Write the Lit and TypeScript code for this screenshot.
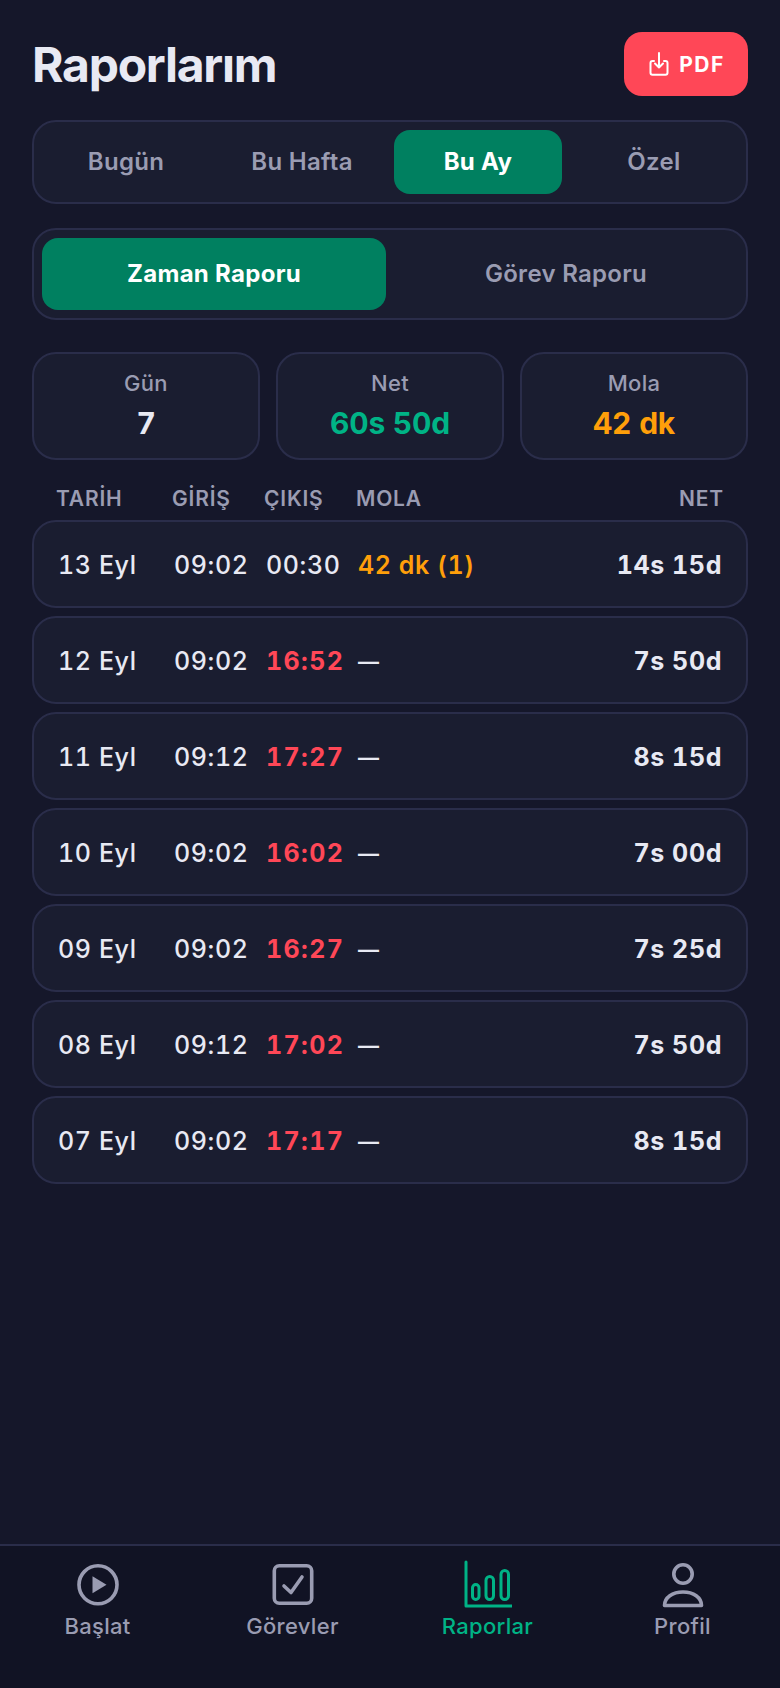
import { LitElement, html, css } from "lit";
import { customElement } from "lit/decorators.js";

const rows = [
  ["13 Eyl", "09:02", "00:30", "42 dk (1)", "14s 15d"],
  ["12 Eyl", "09:02", "16:52", "—", "7s 50d"],
  ["11 Eyl", "09:12", "17:27", "—", "8s 15d"],
  ["10 Eyl", "09:02", "16:02", "—", "7s 00d"],
  ["09 Eyl", "09:02", "16:27", "—", "7s 25d"],
  ["08 Eyl", "09:12", "17:02", "—", "7s 50d"],
  ["07 Eyl", "09:02", "17:17", "—", "8s 15d"],
];

@customElement("app-root")
export class AppRoot extends LitElement {
  static styles = css`
    :host {
      display: flex;
      flex-direction: column;
      width: 780px;
      height: 1688px;
      background: #15172a;
      font-family: Inter, "Noto Sans", sans-serif;
      color: #e8e9f3;
      box-sizing: border-box;
      overflow: hidden;
    }
    * { box-sizing: border-box; }
    .main { flex: 1; padding: 32px 32px 0; display: flex; flex-direction: column; }
    .top { display: flex; justify-content: space-between; align-items: center; height: 64px; margin-bottom: 24px; }
    h1 { margin: 0; padding-top: 2px; font-size: 48px; font-weight: 700; letter-spacing: -1.25px; line-height: 64px; }
    .pdf { width: 124px; height: 64px; border-radius: 18px; background: #ff4757; color: #fff; display: flex; align-items: center; justify-content: center; gap: 8px; font-size: 21px; font-weight: 700; letter-spacing: 1.5px; }
    .seg { display: flex; background: #1a1d30; border: 2px solid #2a2d4a; border-radius: 24px; padding: 8px; }
    .seg > div { flex: 1; display: flex; align-items: center; justify-content: center; font-weight: 600; color: #9a9cb2; font-size: 24px; letter-spacing: 0.3px; padding-bottom: 2px; }
    .seg > div.on { background: #008060; color: #fff; font-weight: 700; }
    .period { height: 84px; margin-bottom: 24px; gap: 8px; }
    .period > div { border-radius: 16px; }
    .mode { height: 92px; margin-bottom: 32px; gap: 8px; }
    .mode > div { border-radius: 16px; }
    .stats { display: flex; gap: 16px; margin-bottom: 20px; }
    .stat { flex: 1; height: 108px; background: #1a1d30; border: 2px solid #2a2d4a; border-radius: 24px; display: flex; flex-direction: column; align-items: center; justify-content: center; gap: 6px; }
    .stat small { font-size: 22px; font-weight: 500; letter-spacing: 0.3px; color: #9a9cb2; line-height: 28px; }
    .stat b { font-size: 30px; font-weight: 700; letter-spacing: -0.2px; line-height: 40px; font-variant-numeric: tabular-nums; }
    .green { color: #00b386; }
    .amber { color: #ff9f0a; }
    .red { color: #ff4757; }
    .grid { display: grid; grid-template-columns: 100px 76px 76px 1fr auto; column-gap: 16px; align-items: center; }
    .head { padding: 0 24px; height: 36px; margin-bottom: 4px; font-size: 21px; font-weight: 600; letter-spacing: 0.8px; color: #9a9cb2; }
    .list { display: flex; flex-direction: column; gap: 8px; }
    .row { height: 88px; padding: 2px 24px 0; background: #1a1d30; border: 2px solid #2a2d4a; border-radius: 24px; font-size: 25px; font-weight: 500; letter-spacing: 0.6px; font-variant-numeric: tabular-nums; white-space: nowrap; }
    .row .net { font-weight: 700; }
    .row .mola { font-weight: 600; }
    .row .dash { font-size: 21px; font-weight: 600; }
    .row .red { font-weight: 700; letter-spacing: 1.4px; }
    nav { height: 144px; background: #111324; border-top: 2px solid #2a2d4a; display: grid; grid-template-columns: repeat(4, 1fr); padding-top: 14px; }
    nav div { display: flex; flex-direction: column; align-items: center; font-size: 22px; font-weight: 500; color: #9a9cb2; letter-spacing: 0.3px; }
    nav div.on { color: #00b386; }
    nav svg { width: 48px; height: 48px; display: block; margin-bottom: 3px; }
    nav span { line-height: 30px; }
  `;

  render() {
    return html`
      <div class="main">
        <div class="top">
          <h1>Raporlarım</h1>
          <div class="pdf">
            <svg width="24" height="24" viewBox="0 0 24 24" fill="none" stroke="#fff" stroke-width="2" stroke-linecap="round" stroke-linejoin="round">
              <path d="M7 9H5.5a2 2 0 0 0-2 2v9.7a2 2 0 0 0 2 2h13a2 2 0 0 0 2-2V11a2 2 0 0 0-2-2H17" />
              <path d="M12 1v14.5M8 11.5l4 4 4-4" />
            </svg>
            PDF
          </div>
        </div>
        <div class="seg period">
          <div>Bugün</div><div>Bu Hafta</div><div class="on">Bu Ay</div><div>Özel</div>
        </div>
        <div class="seg mode">
          <div class="on">Zaman Raporu</div><div>Görev Raporu</div>
        </div>
        <div class="stats">
          <div class="stat"><small>Gün</small><b>7</b></div>
          <div class="stat"><small>Net</small><b class="green">60s 50d</b></div>
          <div class="stat"><small>Mola</small><b class="amber">42 dk</b></div>
        </div>
        <div class="grid head"><span>TARİH</span><span>GİRİŞ</span><span>ÇIKIŞ</span><span>MOLA</span><span>NET</span></div>
        <div class="list">
          ${rows.map(
            (r, i) => html`<div class="grid row">
              <span>${r[0]}</span><span>${r[1]}</span>
              <span class=${i ? "red" : ""}>${r[2]}</span>
              <span class="mola ${i ? "dash" : "amber"}">${r[3]}</span>
              <span class="net">${r[4]}</span>
            </div>`
          )}
        </div>
      </div>
      <nav>
        <div>
          <svg viewBox="0 0 48 48" fill="none" stroke="currentColor" stroke-width="3.6"><circle cx="24" cy="24.8" r="19" /><path d="M18.5 16.3v17l14-8.5z" fill="currentColor" stroke="none" /></svg>
          <span>Başlat</span>
        </div>
        <div>
          <svg viewBox="0 0 48 48" fill="none" stroke="currentColor" stroke-width="3.6" stroke-linecap="round" stroke-linejoin="round"><rect x="5.3" y="5.8" width="37.4" height="37.4" rx="5" /><path d="M15 26l7 6.5L33 17" /></svg>
          <span>Görevler</span>
        </div>
        <div class="on">
          <svg viewBox="0 0 48 48" fill="none" stroke="currentColor" stroke-width="3" stroke-linecap="round" stroke-linejoin="round"><path d="M2 2v44h45.5" /><rect x="8.5" y="24.5" width="6.5" height="15" rx="3.25" /><rect x="22" y="16.5" width="7.5" height="23" rx="3.75" /><rect x="37" y="10.5" width="7.5" height="29" rx="3.75" /></svg>
          <span>Raporlar</span>
        </div>
        <div>
          <svg viewBox="0 0 48 48" fill="none" stroke="currentColor" stroke-width="3.6" stroke-linecap="round" stroke-linejoin="round"><circle cx="24" cy="14" r="9.2" /><path d="M5.5 45.5c0-8 8-13.5 18.5-13.5s18.5 5.5 18.5 13.5z" /></svg>
          <span>Profil</span>
        </div>
      </nav>
    `;
  }
}
